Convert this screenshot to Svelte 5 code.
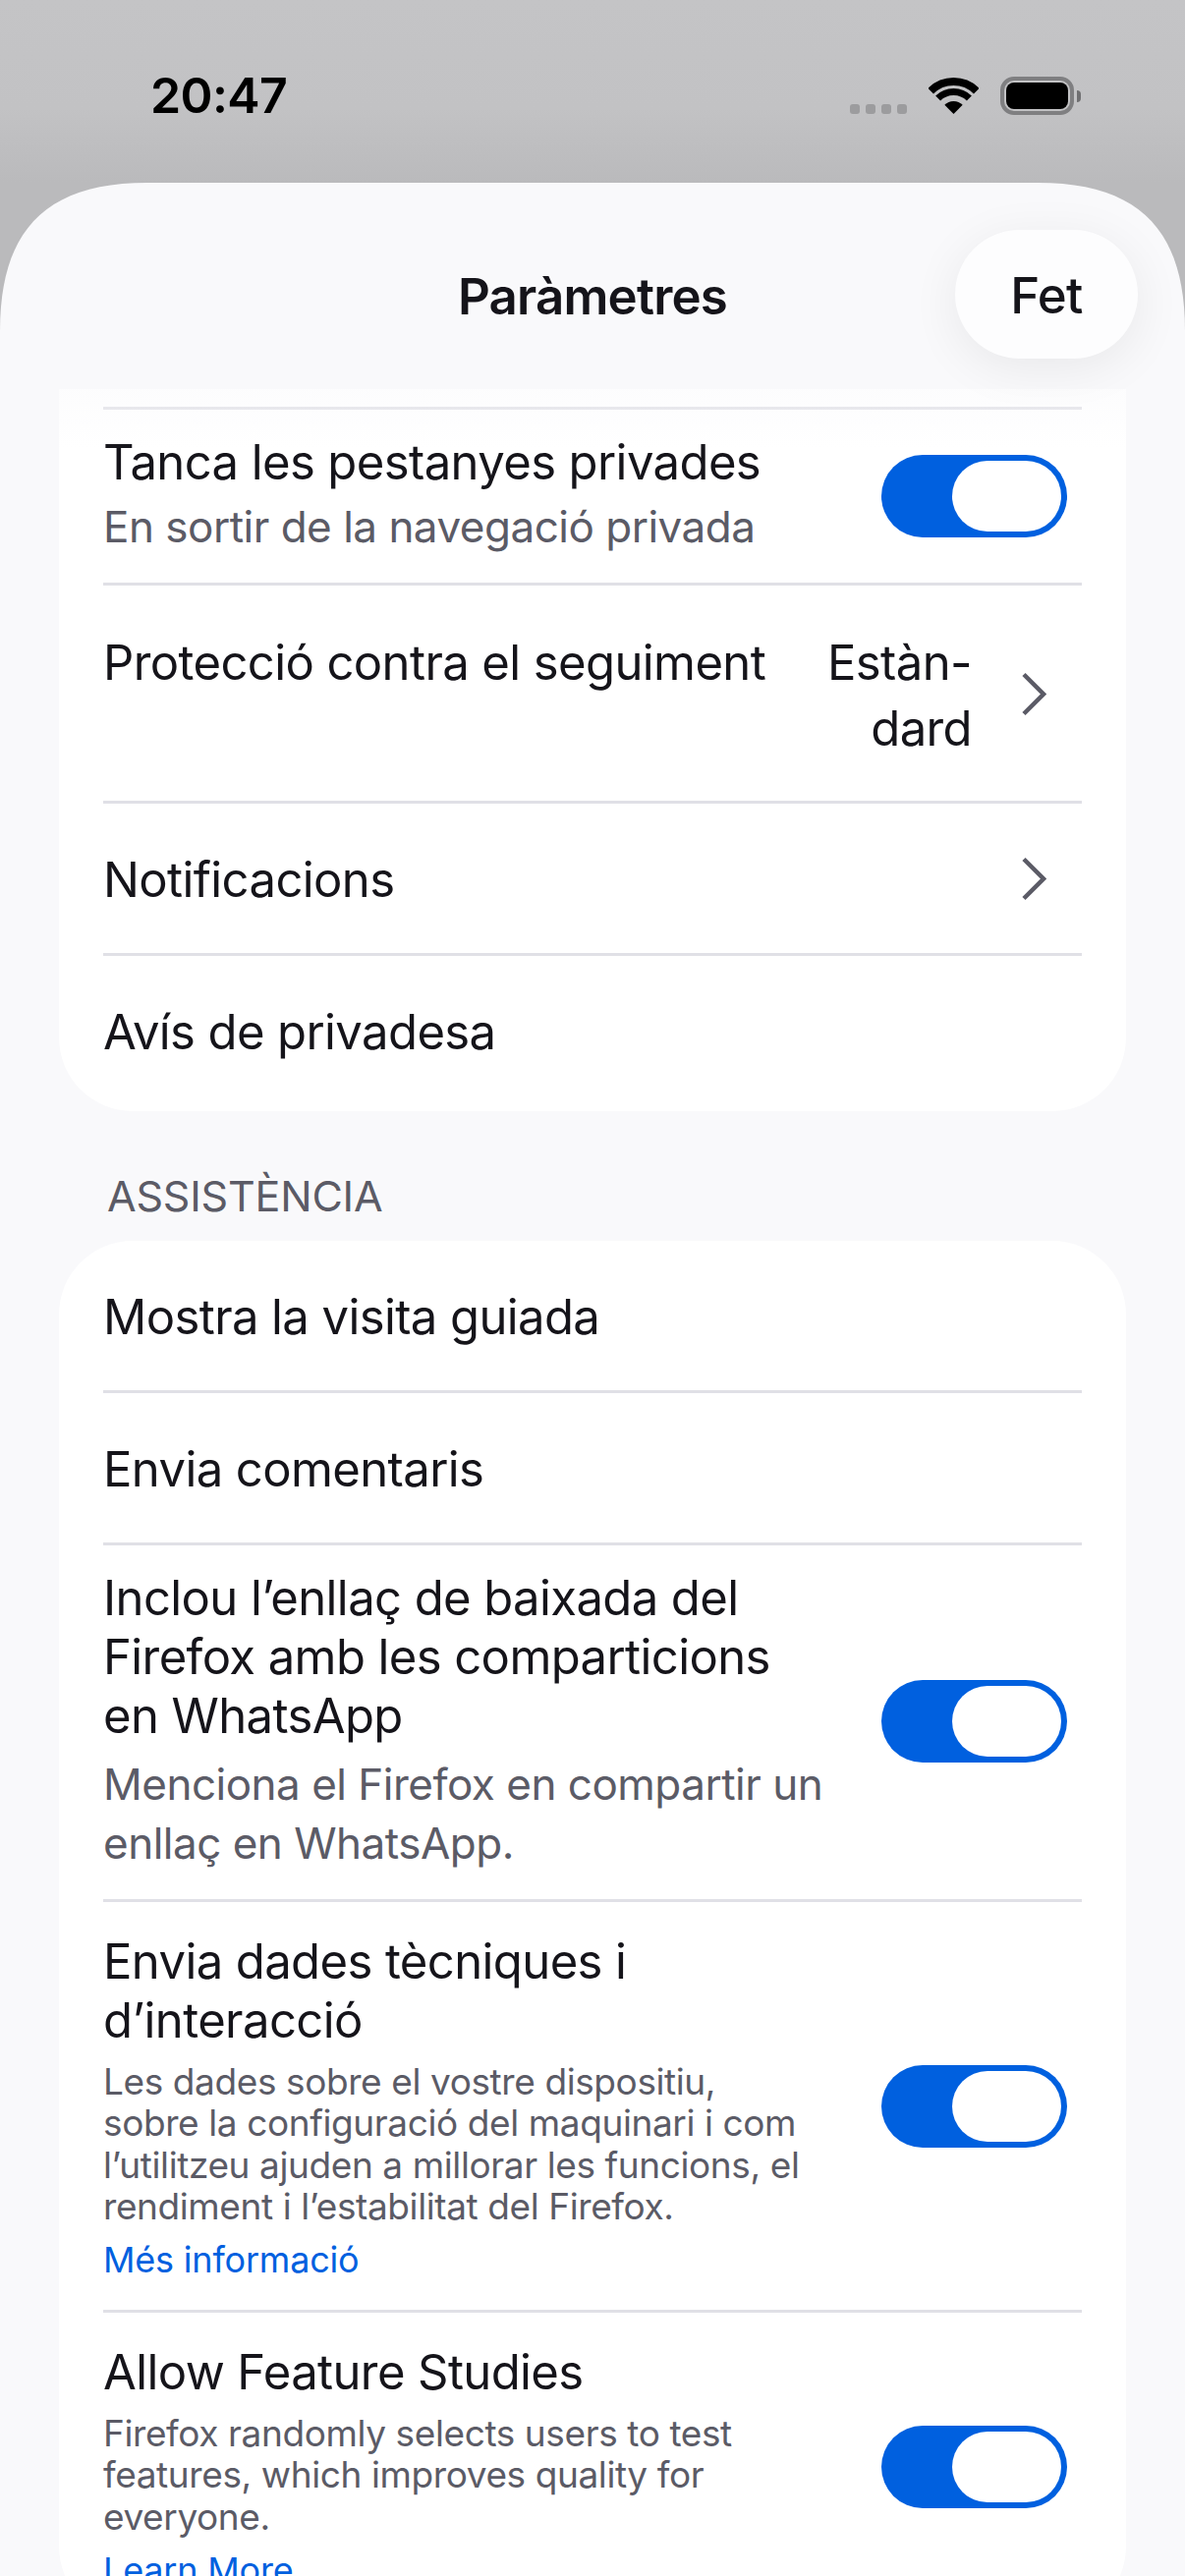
<script>
	const privacy = [
		{ title: 'Tanca les pestanyes privades', sub: 'En sortir de la navegació privada', toggle: true },
		{ title: 'Protecció contra el seguiment', value: 'Estàn-\ndard', chevron: true },
		{ title: 'Notificacions', chevron: true },
		{ title: 'Avís de privadesa' }
	];
	const support = [
		{ title: 'Mostra la visita guiada' },
		{ title: 'Envia comentaris' },
		{
			title: 'Inclou l’enllaç de baixada del\nFirefox amb les comparticions\nen WhatsApp',
			sub: 'Menciona el Firefox en compartir un\nenllaç en WhatsApp.',
			roomy: true,
			toggle: true
		},
		{
			title: 'Envia dades tècniques i\nd’interacció',
			small: 'Les dades sobre el vostre dispositiu,\nsobre la configuració del maquinari i com\nl’utilitzeu ajuden a millorar les funcions, el\nrendiment i l’estabilitat del Firefox.',
			link: 'Més informació',
			toggle: true
		},
		{
			title: 'Allow Feature Studies',
			small: 'Firefox randomly selects users to test\nfeatures, which improves quality for\neveryone.',
			link: 'Learn More',
			toggle: true
		}
	];
</script>

{#snippet row(item)}
	<div
		class="row"
		class:tall={item.small}
		class:with-value={item.value}
		class:plain={!item.sub && !item.small && !item.value}
	>
		<div class="text">
			<div class="title">{item.title}</div>
			{#if item.sub}
				<div class="sub" class:roomy={item.roomy}>{item.sub}</div>
			{/if}
			{#if item.small}
				<div class="small">{item.small}</div>
				<div class="link">{item.link}</div>
			{/if}
		</div>
		{#if item.value}
			<div class="value">{item.value}</div>
		{/if}
		{#if item.chevron}
			<svg class="chevron" width="26" height="45" viewBox="0 0 26 45">
				<path d="M3 2.5 L23 22.5 L3 42.5" fill="none" stroke="#5b5b66" stroke-width="4.5" />
			</svg>
		{/if}
		{#if item.toggle}
			<div class="toggle"><div class="knob"></div></div>
		{/if}
	</div>
{/snippet}

<div class="screen">
	<div class="status">
		<span class="time">20:47</span>
		<div class="status-icons">
			<div class="dots"><i></i><i></i><i></i><i></i></div>
			<svg class="wifi" width="51" height="37" viewBox="0 0 51 37">
				<path d="M2.2 13.7 A33 33 0 0 1 48.8 13.7" fill="none" stroke="#000" stroke-width="8" />
				<path d="M9.6 21.1 A22.5 22.5 0 0 1 41.4 21.1" fill="none" stroke="#000" stroke-width="7" />
				<path d="M25.5 37 L16.3 27.8 A13 13 0 0 1 34.7 27.8 Z" fill="#000" />
			</svg>
			<div class="battery"><div class="fill"></div></div>
			<div class="tip"></div>
		</div>
	</div>

	<div class="sheet">
		<header class="bar">
			<h1>Paràmetres</h1>
			<button class="done">Fet</button>
		</header>

		<div class="card first">
			{#each privacy as item}
				{@render row(item)}
			{/each}
		</div>

		<div class="section">ASSISTÈNCIA</div>

		<div class="card">
			{#each support as item}
				{@render row(item)}
			{/each}
		</div>
	</div>
</div>

<style>
	:global(body) {
		margin: 0;
		background: #f9f9fb;
	}

	.screen {
		width: 1206px;
		height: 2622px;
		overflow: hidden;
		background: linear-gradient(#c4c4c6, #c2c2c4 110px, #bababc 186px);
		font-family: Inter, "Liberation Sans", sans-serif;
		color: #15141a;
	}

	.status {
		height: 186px;
		box-sizing: border-box;
		padding: 68px 106px 0 153px;
		display: flex;
		justify-content: space-between;
		align-items: flex-start;
	}

	.time {
		font-size: 50px;
		line-height: 58px;
		font-weight: 600;
		letter-spacing: -0.6px;
		color: #000;
	}

	.status-icons {
		display: flex;
		align-items: flex-start;
		padding-top: 10px;
	}

	.dots {
		display: flex;
		gap: 6px;
		margin: 28px 22px 0 0;
	}

	.dots i {
		width: 10px;
		height: 10px;
		border-radius: 3px;
		background: #9c9c9e;
	}

	.wifi {
		margin: 1px 22px 0 0;
	}

	.battery {
		width: 75px;
		height: 39px;
		box-sizing: border-box;
		border: 4px solid #7f7f81;
		border-radius: 14px;
		padding: 2px;
	}

	.fill {
		height: 100%;
		background: #000;
		border-radius: 8px;
	}

	.tip {
		width: 4px;
		height: 12px;
		margin: 14px 0 0 3px;
		background: #6f6f71;
		border-radius: 0 4px 4px 0;
	}

	.sheet {
		background: #f9f9fb;
		padding: 0 60px 200px;
		/* iOS sheet corners are squircles, plain radius looks too round */
		clip-path: path('M0 151 C0 50 45 0 150 0 L1056 0 C1161 0 1206 50 1206 151 L1206 4000 L0 4000 Z');
	}

	.bar {
		height: 210px;
		box-sizing: border-box;
		padding-top: 20px;
		margin: 0 -60px;
		position: relative;
		display: flex;
		align-items: center;
		justify-content: center;
	}

	/* fade over the scrolled content */
	.bar::after {
		content: '';
		position: absolute;
		left: 0;
		right: 0;
		top: 100%;
		height: 60px;
		background: linear-gradient(rgba(249, 249, 251, 0.45), rgba(249, 249, 251, 0));
	}

	h1 {
		margin: 0;
		font-size: 51px;
		font-weight: 600;
		letter-spacing: -0.8px;
	}

	.done {
		position: absolute;
		z-index: 1;
		right: 48px;
		top: 48px;
		width: 186px;
		height: 131px;
		padding: 2px 0 0;
		border: 0;
		border-radius: 66px;
		background: #fdfdfe;
		box-shadow: 0 10px 50px rgba(0, 0, 0, 0.07);
		font: 500 51px Inter, "Liberation Sans", sans-serif;
		letter-spacing: -0.6px;
		color: #15141a;
	}

	.card {
		background: #fff;
		border-radius: 75px;
		padding: 0 45px;
	}

	.card.first {
		border-radius: 0 0 75px 75px;
		padding-top: 18px;
	}

	.row {
		display: flex;
		align-items: center;
		border-bottom: 3px solid #e0e0e6;
		padding: 24px 15px 27px 0;
	}

	.first .row:first-child {
		border-top: 3px solid #e0e0e6;
	}

	.first .row:first-child .toggle {
		margin-top: 2px;
	}

	.card .row:last-child {
		border-bottom: 0;
	}

	.row.plain {
		padding-top: 48px;
		padding-bottom: 44px;
	}

	.first .row.plain:last-child {
		padding-bottom: 50px;
	}

	.row.with-value {
		padding-top: 45px;
		padding-bottom: 40px;
	}

	.row.tall {
		padding-top: 31px;
		padding-bottom: 30px;
	}

	.text {
		flex: 1;
		min-width: 0;
		align-self: flex-start;
	}

	.title {
		font-size: 49px;
		line-height: 60px;
		letter-spacing: -0.6px;
		white-space: pre-line;
	}

	.with-value .title {
		line-height: 67px;
	}

	.sub {
		margin-top: 5px;
		font-size: 44px;
		line-height: 60px;
		letter-spacing: -0.5px;
		color: #5b5b66;
		white-space: pre-line;
	}

	.sub.roomy {
		margin-top: 9px;
	}

	.small {
		margin-top: 11px;
		font-size: 37px;
		line-height: 42.3px;
		letter-spacing: -0.4px;
		color: #5b5b66;
		white-space: pre-line;
	}

	.link {
		margin-top: 12px;
		font-size: 36px;
		line-height: 42px;
		letter-spacing: -0.2px;
		color: #0060df;
	}

	.section {
		padding: 61px 0 21px 49px;
		font-size: 43px;
		line-height: 50px;
		letter-spacing: -0.2px;
		color: #5b5b66;
	}

	.value {
		font-size: 49px;
		line-height: 67px;
		letter-spacing: -0.6px;
		text-align: right;
		white-space: pre-line;
		margin-right: 50px;
	}

	.chevron {
		flex: none;
		margin: 0 21px 4px 0;
	}

	.toggle {
		flex: none;
		width: 189px;
		height: 84px;
		box-sizing: border-box;
		padding: 6px;
		border-radius: 42px;
		background: #0060df;
		display: flex;
		justify-content: flex-end;
	}

	.knob {
		width: 111px;
		height: 72px;
		border-radius: 36px;
		background: #fff;
	}
</style>
